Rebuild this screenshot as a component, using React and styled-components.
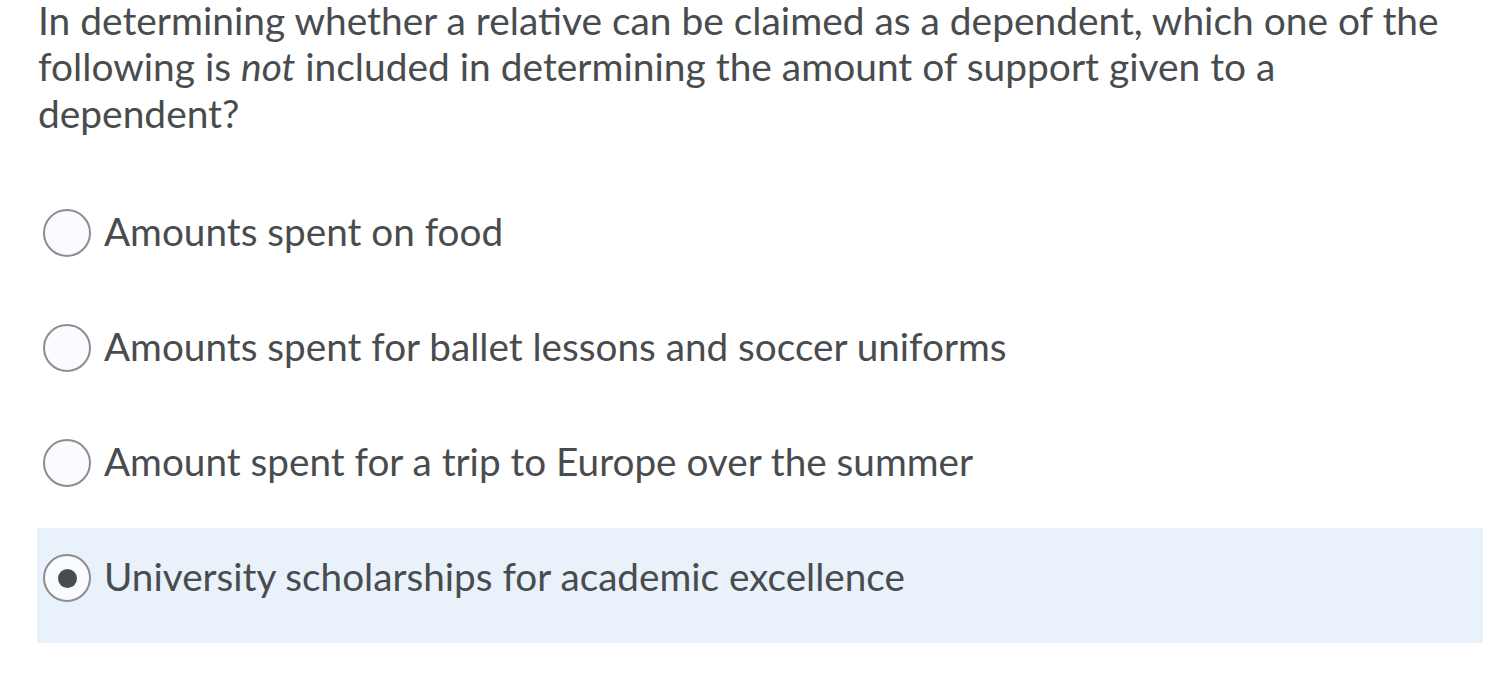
import React, { useState } from 'react'
import styled, { createGlobalStyle } from 'styled-components'

const GlobalStyle = createGlobalStyle`
  html, body {
    margin: 0;
    padding: 0;
    background: #ffffff;
  }
  body {
    font-family: Lato, 'Open Sans', sans-serif;
    color: #494c4e;
  }
`

const Page = styled.div`
  width: 1446px;
  padding-left: 37px;
`

const Question = styled.p`
  max-width: 1420px;
  margin: -3.5px 0 0 1px;
  font-size: 38.9px;
  line-height: 46.5px;
  font-weight: 400;
  color: #494c4e;

  em {
    font-style: italic;
  }
`

const Options = styled.div`
  display: flex;
  flex-direction: column;
  margin-top: 47px;
`

const Row = styled.label`
  display: flex;
  align-items: center;
  gap: 13px;
  height: 115px;
  box-sizing: border-box;
  padding: 26px 0 41px 6px;
  background: ${(p) => (p.$selected ? '#e9f1fb' : 'transparent')};
  cursor: pointer;
`

const Radio = styled.span`
  position: relative;
  flex: none;
  width: 48px;
  height: 48px;
  box-sizing: border-box;
  border-radius: 50%;
  border: 2px solid #8a8e91;
  background: #f9fbff;

  &::after {
    content: '';
    display: ${(p) => (p.$checked ? 'block' : 'none')};
    position: absolute;
    left: 50%;
    top: 50%;
    width: 19px;
    height: 19px;
    margin: -9.5px 0 0 -9.5px;
    border-radius: 50%;
    background: #494c4e;
  }
`

const OptionText = styled.span`
  font-size: 38.7px;
  line-height: 46px;
  margin-bottom: 4px;
  color: #494c4e;
`

const choices = [
  'Amounts spent on food',
  'Amounts spent for ballet lessons and soccer uniforms',
  'Amount spent for a trip to Europe over the summer',
  'University scholarships for academic excellence',
]

export default function App() {
  const [picked, setPicked] = useState(3)

  return (
    <>
      <GlobalStyle />
      <Page>
        <Question>
          In determining whether a relative can be claimed as a dependent, which one of the
          following is <em>not</em> included in determining the amount of support given to a
          dependent?
        </Question>
        <Options>
          {choices.map((text, i) => (
            <Row key={i} $selected={picked === i} onClick={() => setPicked(i)}>
              <Radio $checked={picked === i} />
              <OptionText>{text}</OptionText>
            </Row>
          ))}
        </Options>
      </Page>
    </>
  )
}
